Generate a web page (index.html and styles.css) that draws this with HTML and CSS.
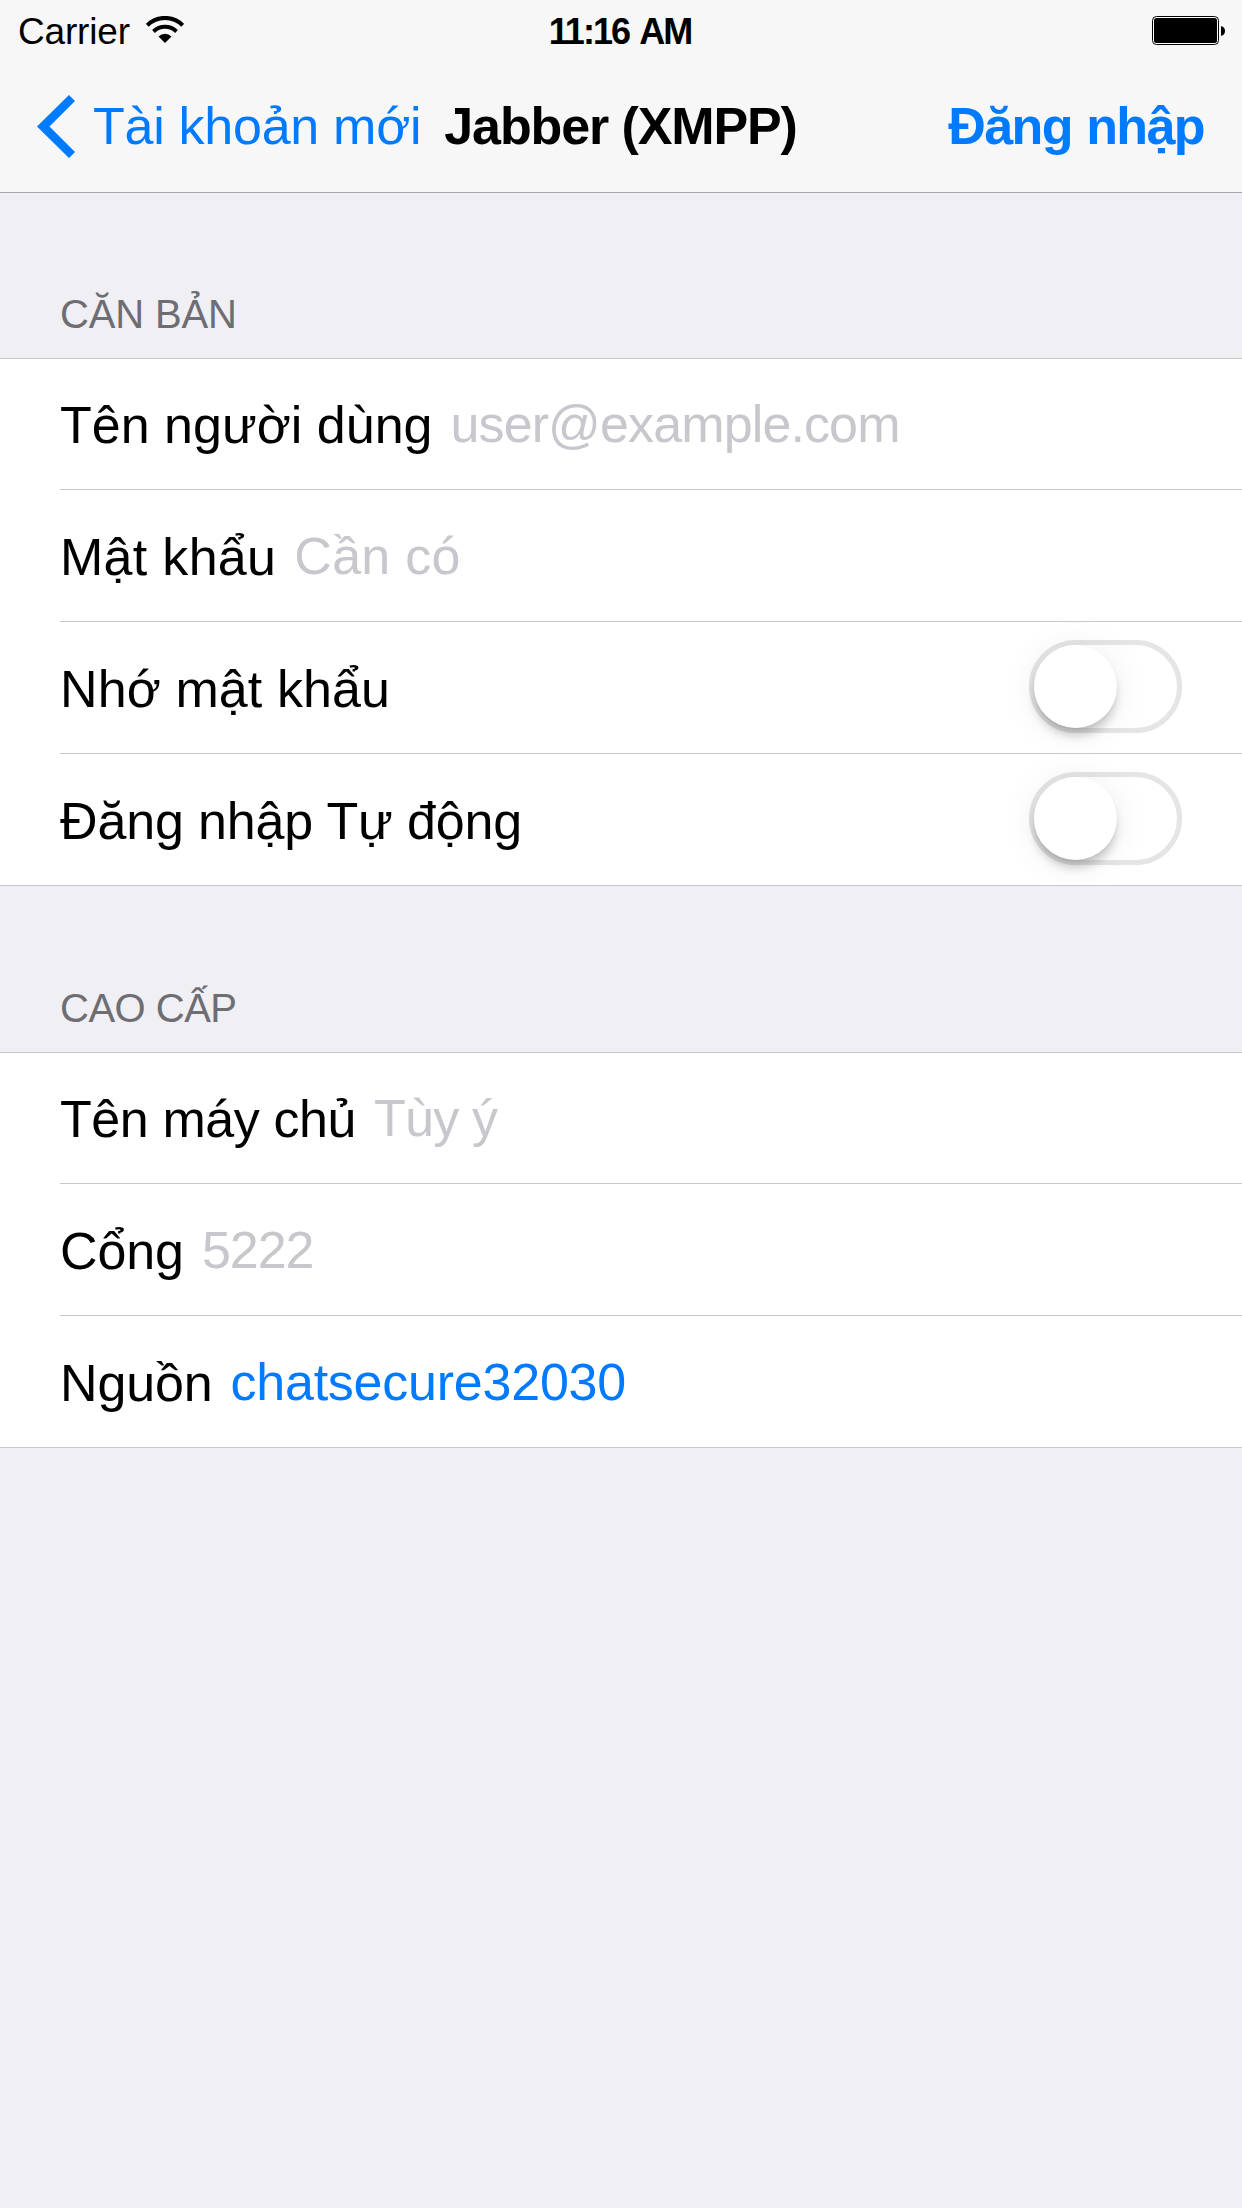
FILE: index.html
```
<!DOCTYPE html>
<html lang="vi">
<head>
<meta charset="utf-8">
<title>Jabber (XMPP)</title>
<link rel="stylesheet" href="styles.css">
</head>
<body>
<header class="topbar">
  <div class="status">
    <div class="status-left">
      <span class="carrier">Carrier</span>
      <svg class="wifi" width="38" height="28" viewBox="0 0 38 28">
        <path d="M1.25 9.25A25.1 25.1 0 0 1 36.75 9.25" fill="none" stroke="#000" stroke-width="4"/>
        <path d="M7.5 15.5A16.3 16.3 0 0 1 30.5 15.5" fill="none" stroke="#000" stroke-width="4"/>
        <path d="M19 27L12.5 20.5A9.2 9.2 0 0 1 25.5 20.5Z"/>
      </svg>
    </div>
    <span class="clock">11:16 AM</span>
    <div class="status-right">
      <svg width="73" height="29" viewBox="0 0 73 29">
        <rect x=".5" y=".5" width="66" height="28" rx="4" fill="#fff" stroke="#000"/>
        <rect x="2" y="2" width="63" height="25" rx="2.5"/>
        <path d="M69 10c2.700 .6 4 2.500 4 5s-1.300 4.400-4 5z"/>
      </svg>
    </div>
  </div>
  <nav class="nav">
    <a class="back">
      <svg width="38" height="63" viewBox="0 0 38 63"><path d="M32 0L38 6L12.500 31.500L38 57L32 63L0 31.500Z" fill="#007aff"/></svg>
      <span class="back-text">Tài khoản mới</span>
    </a>
    <h1 class="title">Jabber (XMPP)</h1>
    <a class="login">Đăng nhập</a>
  </nav>
</header>
<main>
  <section class="section">
    <h2 class="heading heading-basic">CĂN BẢN</h2>
    <div class="group">
      <div class="row"><span class="label">Tên người dùng</span><span class="value user">user@example.com</span></div>
      <div class="row"><span class="label password">Mật khẩu</span><span class="value required">Cần có</span></div>
      <div class="row"><span class="label remember">Nhớ mật khẩu</span><span class="switch"><span class="knob"></span></span></div>
      <div class="row"><span class="label auto">Đăng nhập Tự động</span><span class="switch"><span class="knob"></span></span></div>
    </div>
  </section>
  <section class="section">
    <h2 class="heading heading-advanced">CAO CẤP</h2>
    <div class="group">
      <div class="row"><span class="label host">Tên máy chủ</span><span class="value optional">Tùy ý</span></div>
      <div class="row"><span class="label port">Cổng</span><span class="value port-value">5222</span></div>
      <div class="row"><span class="label source">Nguồn</span><span class="value source-value">chatsecure32030</span></div>
    </div>
  </section>
</main>
</body>
</html>
```
FILE: styles.css
```
* { box-sizing: border-box; }

body {
  margin: 0;
  min-height: 2208px;
  background: #efeff4;
  color: #000;
  font: 52px/60px "Liberation Sans", Arial, sans-serif;
  white-space: nowrap;
}

svg { display: block; }

.topbar {
  height: 193px;
  background: #f7f7f7;
  border-bottom: 1px solid #a7a7aa;
}

/* Status bar */
.status {
  display: grid;
  grid-template-columns: 1fr auto 1fr;
  height: 60px;
  padding: 12px 17px 0 18px;
  font-size: 37px;
  line-height: 40px;
}
.status-left { display: flex; gap: 16px; }
.carrier { letter-spacing: -.17px; }
.wifi { margin-top: 4px; }
.clock {
  margin-right: 3px;
  font-size: 36px;
  font-weight: bold;
  letter-spacing: -1.9px;
  word-spacing: 3.2px;
}
.status-right { display: flex; justify-content: flex-end; padding-top: 4px; }

/* Navigation bar */
.nav {
  display: flex;
  align-items: flex-start;
  padding: 35px 38px 0 37px;
}
.back { display: flex; gap: 18px; color: #007aff; }
.back-text { margin-top: 1px; letter-spacing: -.27px; }
.title { margin: 1px 0 0 23px; font-size: 52px; font-weight: bold; letter-spacing: -1.11px; }
.login { margin: 1px 0 0 auto; color: #007aff; font-weight: bold; letter-spacing: -1.6px; word-spacing: 1.5px; }

/* Form sections */
.heading {
  margin: 0;
  padding: 99px 60px 22px;
  color: #6d6d72;
  font-size: 40px;
  font-weight: normal;
  line-height: 44px;
}
.heading-basic { letter-spacing: -.15px; }
.heading-advanced { padding-top: 100px; letter-spacing: -.5px; }

.group {
  background: #fff;
  border-top: 1px solid #c8c7cc;
  border-bottom: 1px solid #c8c7cc;
}
.row {
  display: flex;
  align-items: flex-start;
  gap: 18px;
  height: 132px;
  margin-left: 60px;
  padding-top: 37px;
  border-bottom: 1px solid #c8c7cc;
}
.row:first-child { height: 131px; padding-top: 36px; }
.row:last-child { height: 131px; border-bottom: 0; }
.value { margin-top: -1px; color: #c7c7cd; }

.user { letter-spacing: -.88px; }
.password { letter-spacing: .3px; }
.required { letter-spacing: .29px; }
.remember { letter-spacing: .1px; }
.auto { letter-spacing: -.15px; }
.host { letter-spacing: -.41px; }
.optional { letter-spacing: -.78px; }
.port { letter-spacing: -.1px; }
.port-value { letter-spacing: -1.05px; }
.source { letter-spacing: -.15px; }
.source-value { color: #007aff; letter-spacing: -.23px; }

/* Toggle switch, off state */
.switch {
  width: 153px;
  height: 93px;
  margin: -19px 60px 0 auto;
  border: 5px solid #e5e5e5;
  border-radius: 47px;
}
.knob {
  display: block;
  width: 83px;
  height: 83px;
  border-radius: 50%;
  background: #fff;
  box-shadow: 0 9px 10px -1px rgba(0, 0, 0, .18), 0 2px 2px rgba(0, 0, 0, .05), 0 3px 36px rgba(0, 0, 0, .08);
}
```
